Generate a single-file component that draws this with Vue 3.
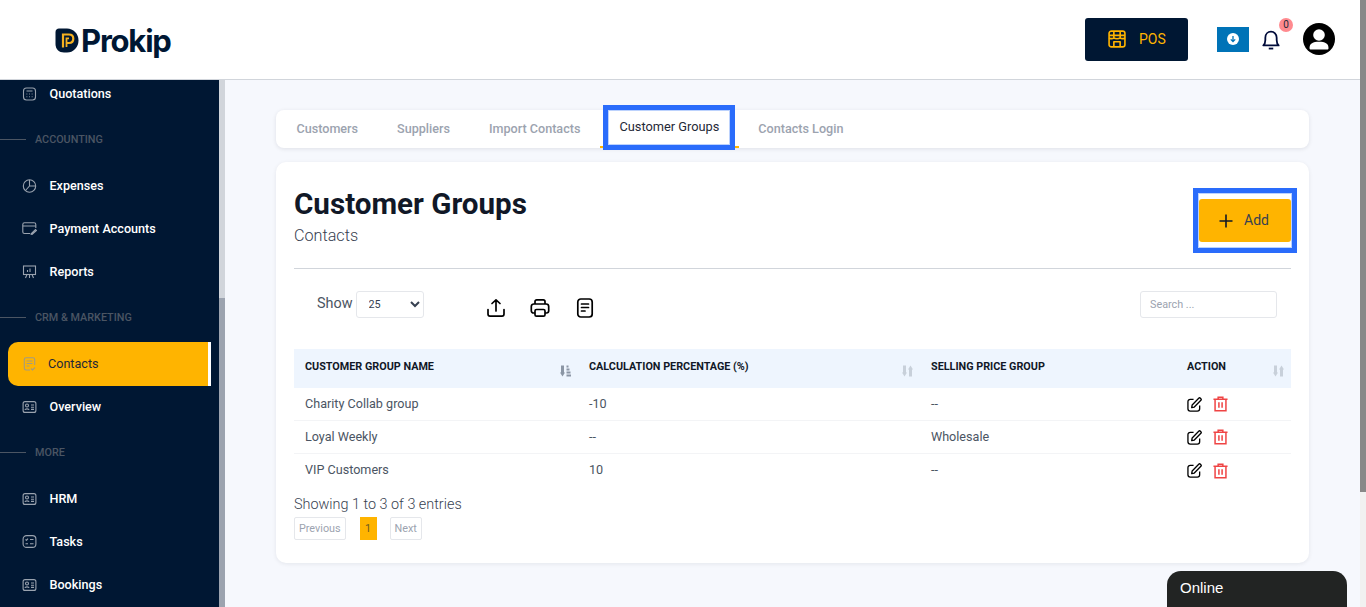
<script setup>
const navBefore = [{ label: 'Quotations', icon: 'calc' }]

const tabs = ['Customers', 'Suppliers', 'Import Contacts', 'Customer Groups', 'Contacts Login']

const rows = [
  { name: 'Charity Collab group', pct: '-10', price: '--' },
  { name: 'Loyal Weekly', pct: '--', price: 'Wholesale' },
  { name: 'VIP Customers', pct: '10', price: '--' },
]
</script>

<template>
  <div class="page">
    <div class="main">
      <header class="topbar">
        <div class="logo">
          <svg class="logo-mark" width="24" height="25" viewBox="0 0 24 25">
            <path d="M4 0.500H12A11.500 12 0 0 1 12 24.500H9C4 24.500 0.500 21 0.500 16V4C0.500 2 2 0.500 4 0.500Z" fill="#001733" />
            <path d="M8 19.500V6.500H14C16.800 6.500 18.300 8.500 18.300 10.800C18.300 13.200 16.800 15 14 15H11.500" fill="none" stroke="#f5b120" stroke-width="2.200" />
            <path d="M11.500 19V10.300H14" fill="none" stroke="#f5b120" stroke-width="1.800" />
          </svg>
          <span class="logo-text">Prokip</span>
        </div>
        <div class="top-actions">
          <button class="pos-btn">
            <svg width="18" height="18" viewBox="0 0 20 20" fill="none" stroke="#ffb400" stroke-width="1.800" stroke-linejoin="round">
              <rect x="1.200" y="1.200" width="17.600" height="17.600" rx="2.500" />
              <path d="M1.200 6H18.800M1.200 8.800C3.500 10 5 10 6.500 8.800C8 10 12 10 13.500 8.800C15 10 16.500 10 18.800 8.800M6.500 1.500V8.800M13.500 1.500V8.800M6.500 18.500V13H13.500V18.500" />
            </svg>
            <span>POS</span>
          </button>
          <button class="download-btn">
            <svg width="12" height="12" viewBox="0 0 12 12">
              <circle cx="6" cy="6" r="6" fill="#fff" />
              <path d="M6 3V8.500M3.800 6.400L6 8.600L8.200 6.400" fill="none" stroke="#0073b7" stroke-width="1.300" />
            </svg>
          </button>
          <div class="bell">
            <svg width="18" height="20" viewBox="0 0 20 22" fill="none" stroke="#000b3a" stroke-width="2">
              <path d="M1.500 17H18.500C16.800 15.500 16.300 14 16.300 11V8.500C16.300 4.500 13.500 1.800 10 1.800C6.500 1.800 3.700 4.500 3.700 8.500V11C3.700 14 3.200 15.500 1.500 17Z" stroke-linejoin="round" />
              <path d="M7.500 20.500H12.500" />
            </svg>
            <span class="badge">0</span>
          </div>
          <svg class="avatar" width="32" height="32" viewBox="0 0 32 32">
            <circle cx="16" cy="16" r="16" fill="#000" />
            <circle cx="16" cy="12" r="5.800" fill="#fff" />
            <path d="M6.500 25C6.500 20.500 10 18.800 16 18.800C22 18.800 25.500 20.500 25.500 25C25.500 26 25 26.500 24 26.500H8C7 26.500 6.500 26 6.500 25Z" fill="#fff" />
          </svg>
        </div>
      </header>

      <div class="body">
        <aside class="sidebar">
          <nav class="nav">
            <a v-for="item in navBefore" :key="item.label" class="nav-item">
              <svg class="nav-icon" width="14" height="14" viewBox="0 0 14 14" fill="none" stroke="#9aa3af" stroke-width="1.100">
                <rect x="1" y="1" width="12" height="12" rx="3" />
                <path d="M4 4H10M4 7H4.800M6.600 7H7.400M9.200 7H10M4 9.800H4.800M6.600 9.800H7.400M9.200 9.800H10" />
              </svg>
              <span>{{ item.label }}</span>
            </a>

            <div class="nav-section"><i></i><span>ACCOUNTING</span></div>

            <a class="nav-item">
              <svg class="nav-icon" width="14" height="14" viewBox="0 0 14 14" fill="none" stroke="#9aa3af" stroke-width="1.100">
                <circle cx="7" cy="7" r="6.200" />
                <path d="M7 1V7H13M7 7L3 11.500" />
              </svg>
              <span>Expenses</span>
            </a>
            <a class="nav-item">
              <svg class="nav-icon" width="15" height="13" viewBox="0 0 15 13" fill="none" stroke="#9aa3af" stroke-width="1.100">
                <path d="M8 11.500H2.500C1.500 11.500 0.800 11 0.800 10V2.500C0.800 1.500 1.500 0.800 2.500 0.800H12C13 0.800 13.800 1.500 13.800 2.500V6" />
                <path d="M0.800 4H13.800M9 12L13.500 7.500L14.500 8.500L10 12.500Z" />
              </svg>
              <span>Payment Accounts</span>
            </a>
            <a class="nav-item">
              <svg class="nav-icon" width="14" height="14" viewBox="0 0 14 14" fill="none" stroke="#9aa3af" stroke-width="1.100">
                <rect x="1" y="1" width="12" height="8.500" />
                <path d="M5 7V5M7.500 7V3.500M4.500 9.500L3 13M9.500 9.500L11 13M7 9.500V13" />
              </svg>
              <span>Reports</span>
            </a>

            <div class="nav-section"><i></i><span>CRM &amp; MARKETING</span></div>

            <a class="nav-item active">
              <svg class="nav-icon" width="12" height="14" viewBox="0 0 12 14" fill="none" stroke="#a39b82" stroke-width="1.100">
                <path d="M6.500 13H2.500C1.500 13 0.800 12.300 0.800 11.300V2.500C0.800 1.500 1.500 0.800 2.500 0.800H9.500C10.500 0.800 11.200 1.500 11.200 2.500V8" />
                <path d="M3 4H9M3 6.500H9M3 9H6M7.500 11.500L9 13L11.500 10.500" />
              </svg>
              <span>Contacts</span>
            </a>
            <a class="nav-item">
              <svg class="nav-icon" width="14" height="12" viewBox="0 0 14 12" fill="none" stroke="#9aa3af" stroke-width="1.100">
                <rect x="0.600" y="0.600" width="12.800" height="10.800" rx="2" />
                <circle cx="4.500" cy="4.500" r="1.500" />
                <path d="M2.500 9C2.500 7.500 6.500 7.500 6.500 9M8.500 4H11.500M8.500 6.200H11.500M8.500 8.400H11.500" />
              </svg>
              <span>Overview</span>
            </a>

            <div class="nav-section"><i></i><span>MORE</span></div>

            <a class="nav-item">
              <svg class="nav-icon" width="14" height="12" viewBox="0 0 14 12" fill="none" stroke="#9aa3af" stroke-width="1.100">
                <rect x="0.600" y="0.600" width="12.800" height="10.800" rx="2" />
                <circle cx="4.500" cy="4.500" r="1.500" />
                <path d="M2.500 9C2.500 7.500 6.500 7.500 6.500 9M8.500 4H11.500M8.500 6.200H11.500M8.500 8.400H11.500" />
              </svg>
              <span>HRM</span>
            </a>
            <a class="nav-item">
              <svg class="nav-icon" width="14" height="13" viewBox="0 0 14 13" fill="none" stroke="#9aa3af" stroke-width="1.100">
                <rect x="0.600" y="0.600" width="12.800" height="11.800" rx="3.500" />
                <path d="M3 4.500L4 5.300L5.500 3.700M7.500 4.500H11M3 8.800H5.500M7.500 8.800H11" />
              </svg>
              <span>Tasks</span>
            </a>
            <a class="nav-item">
              <svg class="nav-icon" width="14" height="12" viewBox="0 0 14 12" fill="none" stroke="#9aa3af" stroke-width="1.100">
                <rect x="0.600" y="0.600" width="12.800" height="10.800" rx="2" />
                <circle cx="4.500" cy="4.500" r="1.500" />
                <path d="M2.500 9C2.500 7.500 6.500 7.500 6.500 9M8.500 4H11.500M8.500 6.200H11.500M8.500 8.400H11.500" />
              </svg>
              <span>Bookings</span>
            </a>
          </nav>
        </aside>
        <div class="side-scroll"><div class="side-thumb"></div></div>

        <main class="content">
          <div class="tabs">
            <a v-for="tab in tabs" :key="tab" class="tab" :class="{ current: tab === 'Customer Groups' }">{{ tab }}</a>
          </div>

          <section class="card">
            <div class="card-head">
              <div>
                <h1>Customer Groups</h1>
                <p>Contacts</p>
              </div>
              <button class="add-btn">
                <svg width="14" height="14" viewBox="0 0 14 14" stroke="#111827" stroke-width="1.600">
                  <path d="M7 0.500V13.500M0.500 7H13.500" />
                </svg>
                <span>Add</span>
              </button>
            </div>

            <div class="tools">
              <label class="show">
                <span>Show</span>
                <select class="show-select">
                  <option>25</option>
                </select>
              </label>
              <div class="tool-icons">
                <svg width="20" height="20" viewBox="0 0 20 20" fill="none" stroke="#000" stroke-width="1.700" stroke-linecap="round" stroke-linejoin="round">
                  <path d="M10 13V2M6 5.500L10 1.800L14 5.500M2 11.500V16C2 17.500 2.800 18.200 4 18.200H16C17.200 18.200 18 17.500 18 16V11.500" />
                </svg>
                <svg width="20" height="20" viewBox="0 0 20 20" fill="none" stroke="#000" stroke-width="1.700" stroke-linejoin="round">
                  <path d="M5 6V3.500C5 2.500 5.700 1.800 6.700 1.800H13.300C14.300 1.800 15 2.500 15 3.500V6" />
                  <path d="M5 15H3.500C2.300 15 1.300 14 1.300 12.800V8.500C1.300 7 2.500 6 3.800 6H16.200C17.500 6 18.700 7 18.700 8.500V12.800C18.700 14 17.700 15 16.500 15H15" />
                  <rect x="5" y="11.500" width="10" height="6.700" rx="1.500" />
                </svg>
                <svg class="doc-icon" width="18" height="20" viewBox="0 0 18 20" fill="none" stroke="#000" stroke-width="1.700" stroke-linecap="round">
                  <rect x="1.800" y="1" width="14.400" height="18" rx="3" />
                  <path d="M5.500 6H12.500M5.500 9.500H12.500M5.500 13H9" />
                </svg>
              </div>
              <input class="search" type="text" placeholder="Search ..." />
            </div>

            <table class="grid">
              <colgroup>
                <col class="col-name" />
                <col class="col-pct" />
                <col class="col-price" />
                <col class="col-action" />
              </colgroup>
              <thead>
                <tr>
                  <th>
                    <div class="th-in">
                      <span>CUSTOMER GROUP NAME</span>
                      <svg class="sort" width="11" height="12" viewBox="0 0 11 11" fill="#8b96a5">
                        <path d="M1 0H4V7H5L2.500 11L0 7H1Z" />
                        <rect x="6.500" y="0" width="2" height="2" />
                        <rect x="6.500" y="3" width="3" height="2" />
                        <rect x="6.500" y="6" width="4" height="2" />
                        <rect x="6.500" y="9" width="4.500" height="2" />
                      </svg>
                    </div>
                  </th>
                  <th>
                    <div class="th-in">
                      <span>CALCULATION PERCENTAGE (%)</span>
                      <svg class="sort" width="11" height="12" viewBox="0 0 11 11" fill="#c8d0da">
                        <path d="M1 0H4V7H5L2.500 11L0 7H1Z" />
                        <path d="M7 11H10V4H11L8.500 0L6 4H7Z" />
                      </svg>
                    </div>
                  </th>
                  <th>
                    <div class="th-in"><span>SELLING PRICE GROUP</span></div>
                  </th>
                  <th>
                    <div class="th-in">
                      <span>ACTION</span>
                      <svg class="sort" width="11" height="12" viewBox="0 0 11 11" fill="#c8d0da">
                        <path d="M1 0H4V7H5L2.500 11L0 7H1Z" />
                        <path d="M7 11H10V4H11L8.500 0L6 4H7Z" />
                      </svg>
                    </div>
                  </th>
                </tr>
              </thead>
              <tbody>
                <tr v-for="row in rows" :key="row.name">
                  <td>{{ row.name }}</td>
                  <td>{{ row.pct }}</td>
                  <td>{{ row.price }}</td>
                  <td>
                    <div class="row-actions">
                      <svg width="15" height="15" viewBox="0 0 16 16" fill="none" stroke="#000" stroke-width="1.400" stroke-linejoin="round">
                        <path d="M7 2.500H3.500C2 2.500 1 3.500 1 5V12.500C1 14 2 15 3.500 15H11C12.500 15 13.500 14 13.500 12.500V9" />
                        <path d="M5.500 8.500L12.500 1.300C13 0.800 13.800 0.800 14.300 1.300L14.800 1.800C15.300 2.300 15.300 3 14.800 3.500L7.800 10.700L5 11.300Z" />
                      </svg>
                      <svg width="15" height="16" viewBox="0 0 16 16" fill="none" stroke="#ef4444" stroke-width="1.600">
                        <path d="M0.500 2.800H15.500M5.500 2.800V0.800H10.500V2.800M2.200 2.800V15.200H13.800V2.800" />
                        <path d="M6.300 6V12M9.700 6V12" />
                      </svg>
                    </div>
                  </td>
                </tr>
              </tbody>
            </table>

            <div class="entries">Showing 1 to 3 of 3 entries</div>
            <div class="pager">
              <a class="page-link">Previous</a>
              <a class="page-num">1</a>
              <a class="page-link">Next</a>
            </div>
          </section>
        </main>
      </div>
    </div>
    <div class="page-scroll"><div class="page-thumb"></div></div>

    <!-- annotation boxes from the screenshot -->
    <div class="mark mark-tab"></div>
    <div class="mark mark-add"></div>

    <div class="chat">Online</div>
  </div>
</template>

<style>
html, body {
  margin: 0;
  overflow: hidden;
}
</style>

<style scoped>
* {
  box-sizing: border-box;
}

.page {
  position: relative;
  display: flex;
  width: 1366px;
  height: 607px;
  overflow: hidden;
  font-family: Roboto, sans-serif;
  background: #f6f8fd;
}

.main {
  flex: 1;
  display: flex;
  flex-direction: column;
  min-width: 0;
}

.page-scroll {
  width: 6px;
  background: #f1f1f1;
}

.page-thumb {
  height: 492px;
  background: #888;
}

/* Header */
.topbar {
  height: 80px;
  flex-shrink: 0;
  display: flex;
  align-items: center;
  justify-content: space-between;
  padding: 0 25px 1px 55px;
  background: #fff;
  border-bottom: 1px solid #d1d5db;
}

.logo {
  display: flex;
  align-items: center;
  gap: 2px;
  margin-top: 3px;
}

.logo-text {
  font-family: Inter, sans-serif;
  font-size: 31px;
  font-weight: 700;
  letter-spacing: -1.200px;
  line-height: 30px;
  color: #001733;
}

.top-actions {
  display: flex;
  align-items: center;
}

.pos-btn {
  display: flex;
  align-items: center;
  gap: 13px;
  width: 103px;
  height: 43px;
  padding: 0 0 0 23px;
  background: #001733;
  border: none;
  border-radius: 3px;
  color: #ffb400;
  font: 400 14px Roboto, sans-serif;
  margin-right: 29px;
}

.download-btn {
  display: flex;
  align-items: center;
  justify-content: center;
  width: 32px;
  height: 25px;
  padding: 0;
  background: #0073b7;
  border: none;
  margin-right: 13px;
}

.bell {
  position: relative;
  width: 18px;
  height: 20px;
  margin-right: 23px;
  margin-top: 1px;
}

.badge {
  position: absolute;
  top: -12px;
  left: 17px;
  width: 14px;
  height: 14px;
  border-radius: 50%;
  background: #ff8a8f;
  color: #1f2937;
  font-size: 10px;
  line-height: 14px;
  text-align: center;
}

/* Sidebar */
.body {
  flex: 1;
  display: flex;
  min-height: 0;
}

.sidebar {
  width: 219px;
  flex-shrink: 0;
  overflow: hidden;
  background: #001733;
}

.nav {
  margin-top: -8px;
}

.nav-item {
  display: flex;
  align-items: center;
  height: 43px;
  padding-left: 22px;
  color: #fff;
  font-size: 12.600px;
  font-weight: 500;
}

.nav-icon {
  width: 15px;
  margin-right: 12.500px;
  flex-shrink: 0;
}

.nav-item.active {
  width: 203px;
  height: 44px;
  margin-left: 8px;
  margin-bottom: -1px;
  padding: 0 0 1px 14px;
  background: #ffb400;
  border-right: 3px solid #fff;
  border-radius: 10px 0 0 10px;
  color: #1f2937;
  font-weight: 400;
}

.nav-item.active .nav-icon {
  margin-right: 11px;
}

.nav-section {
  display: flex;
  align-items: center;
  height: 49px;
  color: #4b5563;
  font-size: 10.800px;
  font-weight: 500;
}

.nav-section i {
  width: 26px;
  height: 1px;
  margin-right: 9px;
  background: #4b5563;
}

.side-scroll {
  width: 6px;
  flex-shrink: 0;
  padding-top: 218px;
  background: #d1d5db;
}

.side-thumb {
  height: 100%;
  background: #9ca3af;
}

/* Content */
.content {
  flex: 1;
  min-width: 0;
  padding: 30px 51px 0;
}

.tabs {
  display: flex;
  height: 38px;
  padding-left: 1px;
  background: #fff;
  border-radius: 8px;
  box-shadow: 0 1px 4px rgba(17, 24, 39, 0.1);
}

.tab {
  display: flex;
  align-items: center;
  padding: 0 19.500px 2px;
  color: #9ca3af;
  font-size: 12.600px;
  font-weight: 500;
}

.tab.current {
  height: 38px;
  padding: 0 19.500px 3px;
  color: #1f2937;
  font-weight: 400;
  font-size: 12.800px;
  border-bottom: 2px solid #ffb400;
}

.card {
  height: 401px;
  margin-top: 14px;
  padding: 0 18px;
  background: #fff;
  border-radius: 10px;
  box-shadow: 0 1px 4px rgba(17, 24, 39, 0.08);
}

.card-head {
  display: flex;
  align-items: flex-start;
  justify-content: space-between;
  height: 107px;
  padding-top: 25px;
  border-bottom: 1px solid #d1d5db;
}

.card-head h1 {
  margin: 0;
  color: #111827;
  font-size: 29.600px;
  font-weight: 700;
  line-height: 34px;
}

.card-head p {
  margin: 5px 0 0;
  color: #374151;
  font-size: 16.200px;
  font-weight: 300;
  line-height: 20px;
}

.add-btn {
  display: flex;
  align-items: center;
  justify-content: center;
  gap: 11px;
  width: 92px;
  height: 43px;
  margin-top: 12px;
  padding: 0 2px 0 0;
  background: #ffb400;
  border: none;
  border-radius: 3px;
  color: #374151;
  font: 400 14px Roboto, sans-serif;
}

.add-btn span {
  margin-top: -2px;
}

.tools {
  display: flex;
  align-items: center;
  height: 54px;
  margin-top: 8px;
  padding: 0 14px 0 23px;
}

.show {
  display: flex;
  align-items: center;
  gap: 3px;
  color: #4b5563;
  font-size: 14.400px;
  margin-top: -2px;
}

.show-select {
  width: 68px;
  height: 27px;
  margin-top: 3px;
  padding: 0 0 0 8px;
  background: #fff;
  border: 1px solid #e5e7eb;
  border-radius: 3px;
  color: #374151;
  font: 400 10.800px Roboto, sans-serif;
}

.tool-icons {
  display: flex;
  align-items: center;
  gap: 24px;
  margin-left: 62px;
  margin-top: 8px;
}

.doc-icon {
  margin-left: 2px;
}

.search {
  width: 137px;
  height: 27px;
  margin-left: auto;
  padding: 0 9px;
  border: 1px solid #e5e7eb;
  border-radius: 3px;
  font: 400 10.800px Roboto, sans-serif;
  outline: none;
}

.search::placeholder {
  color: #9ca3af;
}

.grid {
  width: 997px;
  margin-top: 18px;
  border-collapse: separate;
  border-spacing: 0;
  table-layout: fixed;
}

.col-name { width: 284px; }
.col-pct { width: 342px; }
.col-price { width: 256px; }
.col-action { width: 115px; }

.grid th {
  height: 39px;
  padding: 0 0 0 11px;
  background: #eef5fe;
  color: #111827;
  font-size: 10.800px;
  font-weight: 700;
  text-align: left;
}

.th-in {
  display: flex;
  justify-content: space-between;
  padding-right: 7px;
  margin-top: -5px;
}

.sort {
  flex-shrink: 0;
  margin-top: 5px;
  margin-bottom: -5px;
}

.grid td {
  height: 33px;
  padding: 0 0 2px 11px;
  border-bottom: 1px solid #f3f4f6;
  color: #4b5563;
  font-size: 12.600px;
}

.grid tbody tr:last-child td {
  border-bottom: none;
}

.row-actions {
  display: flex;
  align-items: center;
  gap: 11px;
  margin-bottom: -2px;
}

.entries {
  margin-top: 8px;
  color: #374151;
  font-size: 14.400px;
  font-weight: 300;
  line-height: 20px;
}

.pager {
  display: flex;
  align-items: stretch;
  gap: 14px;
  height: 23px;
  margin-top: 2px;
  font-size: 10.800px;
}

.page-link {
  display: flex;
  align-items: center;
  padding: 0 4px;
  border: 1px solid #e5e7eb;
  border-radius: 2px;
  color: #9ca3af;
}

.page-num {
  display: flex;
  align-items: center;
  justify-content: center;
  width: 17px;
  margin-right: -1px;
  background: #ffb400;
  color: #6b5a20;
}

/* Annotation boxes */
.mark {
  position: absolute;
  border: 5px solid #2a6cfb;
  box-shadow: inset 0 0 0 1px #bcd2fd;
  pointer-events: none;
}

.mark-tab {
  left: 603px;
  top: 105px;
  width: 132px;
  height: 45px;
}

.mark-add {
  left: 1193px;
  top: 188px;
  width: 104px;
  height: 65px;
}

.chat {
  position: absolute;
  left: 1167px;
  top: 571px;
  width: 180px;
  height: 36px;
  padding: 8px 13px;
  background: #222423;
  border-radius: 14px 14px 0 0;
  color: #fff;
  font: 400 15px "Liberation Sans", sans-serif;
}
</style>
